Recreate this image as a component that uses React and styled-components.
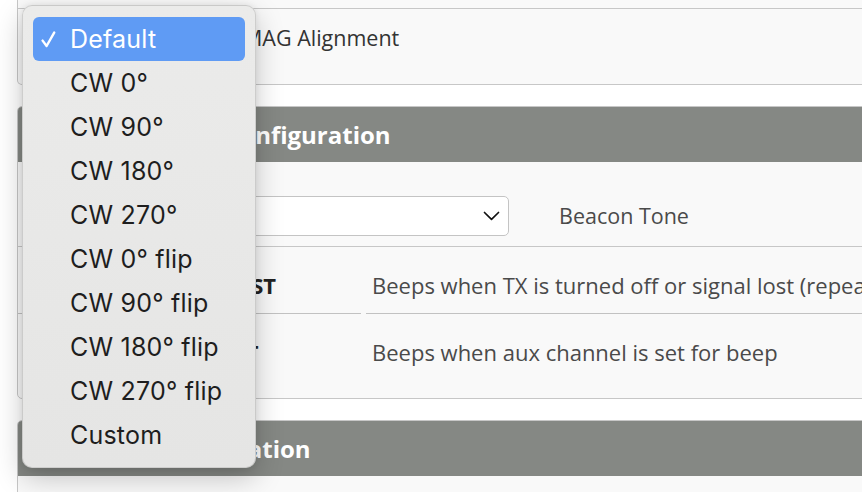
import styled, { createGlobalStyle } from "styled-components"

const GlobalStyle = createGlobalStyle`
    html, body {
        margin: 0;
        padding: 0;
        background: #ffffff;
        overflow: hidden;
    }
    body {
        font-family: "Open Sans", "Liberation Sans", sans-serif;
        color: #3a3a3a;
    }
`

const orientations = [
    "Default", "CW 0°", "CW 90°", "CW 180°", "CW 270°",
    "CW 0° flip", "CW 90° flip", "CW 180° flip", "CW 270° flip", "Custom"
]

const beepers = [
    { name: "RXLOST", desc: "Beeps when TX is turned off or signal lost (repeat until TX is okay)" },
    { name: "RXSET", desc: "Beeps when aux channel is set for beep" },
]

function Chevron() {
    return (
        <svg width="17" height="10" viewBox="0 0 17 10" fill="none">
            <path d="M1.5 1.5 L8.5 8.3 L15.5 1.5" stroke="#111" strokeWidth="1.7" strokeLinecap="round" strokeLinejoin="round" />
        </svg>
    )
}

function Check() {
    return (
        <svg width="15" height="17" viewBox="0 0 15 17" fill="none">
            <path d="M1.6 9.6 L5.6 15 L13.2 1.6" stroke="#fff" strokeWidth="2.4" strokeLinecap="round" strokeLinejoin="round" />
        </svg>
    )
}

export default function App() {
    return (
        <Page>
            <GlobalStyle />
            <Panel $cut>
                <Stub />
                <AlignRow>
                    <Select $width="160px" />
                    <Label>MAG Alignment</Label>
                </AlignRow>
            </Panel>

            <Panel>
                <Header>Dshot Beacon Configuration</Header>
                <ToneRow>
                    <Select $width="471px"><Chevron /></Select>
                    <Label $muted>Beacon Tone</Label>
                </ToneRow>
                {beepers.map((b, i) => (
                    <BeepRow key={b.name} $last={i === beepers.length - 1}>
                        <NameCell>{b.name}</NameCell>
                        <DescCell>{b.desc}</DescCell>
                    </BeepRow>
                ))}
            </Panel>

            <Panel>
                <Header>Beeper Configuration</Header>
                <Spacer />
            </Panel>

            <Menu>
                {orientations.map((o, i) => (
                    <MenuItem key={o} $active={i === 0}>
                        <CheckSlot>{i === 0 ? <Check /> : null}</CheckSlot>
                        {o}
                    </MenuItem>
                ))}
            </Menu>
        </Page>
    )
}

const Page = styled.div`
    position: relative;
    width: 862px;
    height: 492px;
    padding-left: 17px;
    box-sizing: border-box;
    display: flex;
    flex-direction: column;
    gap: 21px;
    overflow: hidden;
`

const Panel = styled.section`
    width: 900px;
    flex-shrink: 0;
    background: #f9f9f9;
    border: 1px solid #c7c7c7;
    border-top: ${props => props.$cut ? "none" : "1px solid #c7c7c7"};
    border-radius: ${props => props.$cut ? "0 0 5px 5px" : "5px"};
    overflow: hidden;
`

const Stub = styled.div`
    height: 8px;
    border-bottom: 1px solid #c7c7c7;
`

const AlignRow = styled.div`
    height: 75px;
    box-sizing: border-box;
    padding: 9px 0 0 20px;
    display: flex;
    align-items: flex-start;
    gap: 45px;
`

const Select = styled.div`
    width: ${props => props.$width};
    height: 40px;
    box-sizing: border-box;
    background: #fff;
    border: 1px solid #c4c4c4;
    border-radius: 5px;
    display: flex;
    align-items: center;
    justify-content: flex-end;
    padding-right: 8px;
    flex-shrink: 0;
`

const Label = styled.div`
    font-size: 21.5px;
    line-height: 40px;
    color: ${props => props.$muted ? "#4a4a4a" : "#333"};
    white-space: nowrap;
`

const Header = styled.h2`
    margin: 0;
    height: 55px;
    box-sizing: border-box;
    padding-left: 36px;
    background: #858884;
    color: #fff;
    font-size: 24px;
    font-weight: 700;
    line-height: 55px;
    white-space: nowrap;
`

const ToneRow = styled.div`
    display: flex;
    align-items: center;
    gap: 50px;
    padding: 34px 0 10px 20px;
    border-bottom: 1px solid #c7c7c7;
`

const BeepRow = styled.div`
    display: grid;
    grid-template-columns: 343px 1fr;
    column-gap: 5px;
    height: ${props => props.$last ? "84px" : "67px"};

    & > div {
        border-bottom: ${props => props.$last ? "none" : "1px solid #c2c2c2"};
    }
`

const NameCell = styled.div`
    padding: 23px 0 0 174px;
    font-size: 22px;
    font-weight: 700;
    line-height: 30px;
    color: #222;
    white-space: nowrap;
`

const DescCell = styled.div`
    padding: 23px 0 0 6px;
    font-size: 22px;
    line-height: 30px;
    color: #4a4a4a;
    white-space: nowrap;
`

const Spacer = styled.div`
    height: 60px;
`

const Menu = styled.div`
    position: absolute;
    left: 22px;
    top: 5px;
    width: 234px;
    box-sizing: border-box;
    padding: 11px 10px 10px;
    background: linear-gradient(180deg, #ebebea 0%, #e5e5e4 100%);
    border: 1px solid rgba(0, 0, 0, 0.12);
    border-radius: 10px;
    box-shadow: 0 10px 28px rgba(0, 0, 0, 0.22), 0 0 6px rgba(0, 0, 0, 0.08);
    font-family: Inter, "Liberation Sans", sans-serif;
`

const MenuItem = styled.div`
    height: 44px;
    display: flex;
    align-items: center;
    padding-left: 8px;
    border-radius: 6px;
    font-size: 25px;
    letter-spacing: 0.2px;
    color: ${props => props.$active ? "#fff" : "#1e1e1e"};
    background: ${props => props.$active ? "#5f9bf4" : "transparent"};
    white-space: nowrap;
`

const CheckSlot = styled.span`
    width: 29px;
    display: flex;
    align-items: center;
`
